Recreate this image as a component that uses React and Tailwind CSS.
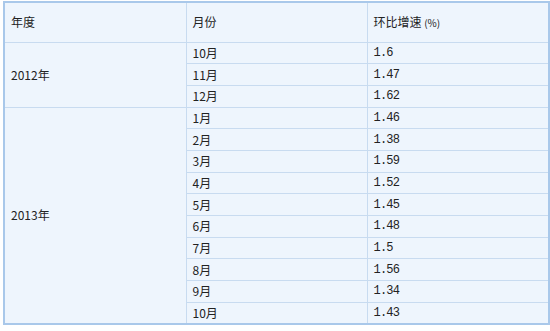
import React from 'react'

const data = [
  { year: '2012年', rows: [['10月', '1.6'], ['11月', '1.47'], ['12月', '1.62']] },
  {
    year: '2013年',
    rows: [
      ['1月', '1.46'], ['2月', '1.38'], ['3月', '1.59'], ['4月', '1.52'], ['5月', '1.45'],
      ['6月', '1.48'], ['7月', '1.5'], ['8月', '1.56'], ['9月', '1.34'], ['10月', '1.43'],
    ],
  },
]

const cjk = { fontFamily: '"Noto Sans CJK SC", "Liberation Sans", sans-serif' }
const num = { fontFamily: '"Liberation Mono", monospace' }

export default function App() {
  return (
    <div className="w-[550px] h-[331px] bg-white pl-[3px] pt-[1px]">
      <table
        className="w-[545px] border-collapse border-2 border-[#a9c8ea] bg-[#eef5fd] text-[12px] text-[#222] table-fixed"
        style={cjk}
      >
        <colgroup>
          <col className="w-[182px]" />
          <col className="w-[181px]" />
          <col className="w-[182px]" />
        </colgroup>
        <thead>
          <tr className="h-[40px]">
            <th className="border border-[#c8dbf0] text-left font-normal pl-[6px]">年度</th>
            <th className="border border-[#c8dbf0] text-left font-normal pl-[6px]">月份</th>
            <th className="border border-[#c8dbf0] text-left font-normal pl-[6px]">
              环比增速 <span className="text-[10px]">(%)</span>
            </th>
          </tr>
        </thead>
        <tbody>
          {data.map((g) =>
            g.rows.map(([m, v], i) => (
              <tr key={g.year + m} className="h-[21.7px]">
                {i === 0 && (
                  <td rowSpan={g.rows.length} className="border border-[#c8dbf0] pl-[6px] align-middle">
                    {g.year}
                  </td>
                )}
                <td className="border border-[#c8dbf0] pl-[6px] leading-[14px] py-0">{m}</td>
                <td className="border border-[#c8dbf0] pl-[6px] leading-[14px] py-0 text-[12px] tracking-[-0.8px]" style={num}>
                  {v}
                </td>
              </tr>
            ))
          )}
        </tbody>
      </table>
    </div>
  )
}
